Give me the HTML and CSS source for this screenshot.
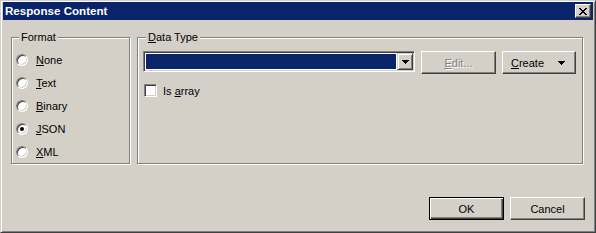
FILE: index.html
```html
<!DOCTYPE html>
<html lang="en">
<head>
<meta charset="UTF-8">
<title>Response Content</title>
<link rel="stylesheet" href="styles.css">
</head>
<body>

<div class="window">
    <!-- Title bar -->
    <div class="titlebar">
        <span class="title">Response Content</span>
        <button class="close-btn">
            <svg width="8" height="7" viewBox="0 0 8 7" shape-rendering="crispEdges">
                <path d="M0 0h2v1h-2zM6 0h2v1h-2zM1 1h2v1h-2zM5 1h2v1h-2zM2 2h4v1h-4zM3 3h2v1h-2zM2 4h4v1h-4zM1 5h2v1h-2zM5 5h2v1h-2zM0 6h2v1h-2zM6 6h2v1h-2z" fill="#000"/>
            </svg>
        </button>
    </div>

    <div class="groups">
        <!-- Format -->
        <div class="group format-group">
            <span class="legend">Format</span>
            <label class="radio-row"><span class="radio"></span><span><u>N</u>one</span></label>
            <label class="radio-row"><span class="radio"></span><span><u>T</u>ext</span></label>
            <label class="radio-row"><span class="radio"></span><span><u>B</u>inary</span></label>
            <label class="radio-row"><span class="radio checked"></span><span><u>J</u>SON</span></label>
            <label class="radio-row"><span class="radio"></span><span><u>X</u>ML</span></label>
        </div>

        <!-- Data type -->
        <div class="group type-group">
            <span class="legend"><u>D</u>ata Type</span>
            <div class="type-row">
                <div class="combo">
                    <div class="combo-field"><div class="combo-value"></div></div>
                    <div class="combo-btn">
                        <svg width="7" height="4" viewBox="0 0 7 4" shape-rendering="crispEdges">
                            <path d="M0 0h7v1h-7zM1 1h5v1h-5zM2 2h3v1h-3zM3 3h1v1h-1z" fill="#000"/>
                        </svg>
                    </div>
                </div>
                <button class="btn edit-btn" disabled><span><u>E</u>dit...</span></button>
                <button class="btn create-btn">
                    <span><u>C</u>reate</span>
                    <svg width="7" height="4" viewBox="0 0 7 4" shape-rendering="crispEdges">
                        <path d="M0 0h7v1h-7zM1 1h5v1h-5zM2 2h3v1h-3zM3 3h1v1h-1z" fill="#000"/>
                    </svg>
                </button>
            </div>
            <label class="check-row"><span class="checkbox"></span><span>Is <u>a</u>rray</span></label>
        </div>
    </div>

    <!-- Dialog buttons -->
    <div class="footer">
        <button class="btn default-btn">OK</button>
        <button class="btn">Cancel</button>
    </div>
</div>

</body>
</html>
```

FILE: styles.css
```css
body {
    margin: 0;
    background-color: #d4d0c8;
    font-family: "Liberation Sans", Arial, sans-serif;
    font-size: 11px;
    color: #000;
}
u {
    text-decoration: underline;
    text-underline-offset: 1px;
}
.window {
    box-sizing: border-box;
    width: 596px;
    height: 233px;
    padding: 1px 2px 2px 2px;
    background-color: #d4d0c8;
    border: 1px solid;
    border-color: #d4d0c8 #404040 #404040 #d4d0c8;
    box-shadow: inset 1px 1px 0 #fff, inset -1px -1px 0 #808080;
}
.titlebar {
    display: flex;
    justify-content: space-between;
    align-items: center;
    height: 18px;
    padding: 0 2px;
    background-color: #0a246a;
}
.title {
    color: #fff;
    font-weight: bold;
    font-size: 11.6px;
    line-height: 18px;
}
.close-btn {
    box-sizing: border-box;
    display: flex;
    align-items: flex-start;
    justify-content: flex-start;
    width: 16px;
    height: 14px;
    padding: 3px 0 0 3px;
    margin: 0;
    background-color: #d4d0c8;
    border: 1px solid;
    border-color: #fff #404040 #404040 #fff;
    box-shadow: inset -1px -1px 0 #808080;
}
.groups {
    display: flex;
    gap: 7px;
    margin-top: 17px;
    padding: 0 8px;
}
.group {
    position: relative;
    box-sizing: border-box;
    height: 127px;
    border: 1px solid #808080;
    box-shadow: 1px 1px 0 #fff, inset 1px 1px 0 #fff;
}
.legend {
    position: absolute;
    top: -7px;
    left: 7px;
    padding: 0 2px;
    line-height: 13px;
    background-color: #d4d0c8;
}
.format-group {
    width: 119px;
    padding: 10px 0 0 4px;
}
.type-group {
    width: 446px;
    padding: 13px 0 0 5px;
}
.type-group .legend {
    left: 8px;
}
.radio-row {
    display: flex;
    align-items: center;
    gap: 8px;
    height: 23px;
}
.radio {
    position: relative;
    box-sizing: border-box;
    width: 12px;
    height: 12px;
    border-radius: 50%;
    background-color: #fff;
    border: 1px solid;
    border-color: #808080 #fff #fff #808080;
    box-shadow: inset 1px 1px 0 #404040, inset -1px -1px 0 #d4d0c8;
}
.radio.checked::after {
    content: "";
    position: absolute;
    left: 3px;
    top: 3px;
    width: 4px;
    height: 4px;
    border-radius: 50%;
    background-color: #000;
}
.type-row {
    display: flex;
    align-items: flex-start;
    gap: 6px;
}
.combo {
    box-sizing: border-box;
    display: flex;
    width: 272px;
    height: 21px;
    background-color: #fff;
    border: 1px solid;
    border-color: #808080 #fff #fff #808080;
    box-shadow: inset 1px 1px 0 #404040, inset -1px -1px 0 #d4d0c8;
    padding: 1px;
}
.combo-field {
    flex: 1;
    padding: 1px;
}
.combo-value {
    height: 100%;
    background-color: #0a246a;
}
.combo-btn {
    box-sizing: border-box;
    display: flex;
    align-items: center;
    justify-content: center;
    width: 16px;
    height: 17px;
    background-color: #d4d0c8;
    border: 1px solid;
    border-color: #d4d0c8 #404040 #404040 #d4d0c8;
    box-shadow: inset 1px 1px 0 #fff, inset -1px -1px 0 #808080;
}
.btn {
    box-sizing: border-box;
    width: 75px;
    height: 23px;
    padding: 0;
    margin: 0;
    font-family: "Liberation Sans", Arial, sans-serif;
    font-size: 11px;
    color: #000;
    background-color: #d4d0c8;
    border: 1px solid;
    border-color: #fff #404040 #404040 #fff;
    box-shadow: inset -1px -1px 0 #808080;
}
.edit-btn {
    color: #808080;
    text-shadow: 1px 1px 0 #fff;
}
.create-btn {
    display: flex;
    align-items: center;
    justify-content: space-between;
    width: 74px;
    padding: 0 10px 0 8px;
}
.check-row {
    display: flex;
    align-items: center;
    gap: 6px;
    margin: 10px 0 0 1px;
    height: 13px;
}
.checkbox {
    box-sizing: border-box;
    width: 13px;
    height: 13px;
    background-color: #fff;
    border: 1px solid;
    border-color: #808080 #fff #fff #808080;
    box-shadow: inset 1px 1px 0 #404040, inset -1px -1px 0 #d4d0c8;
}
.footer {
    display: flex;
    justify-content: flex-end;
    gap: 6px;
    margin-top: 33px;
    padding-right: 8px;
}
.default-btn {
    border: 1px solid #000;
    box-shadow: inset 1px 1px 0 #fff, inset -1px -1px 0 #404040, inset -2px -2px 0 #808080;
}
```
